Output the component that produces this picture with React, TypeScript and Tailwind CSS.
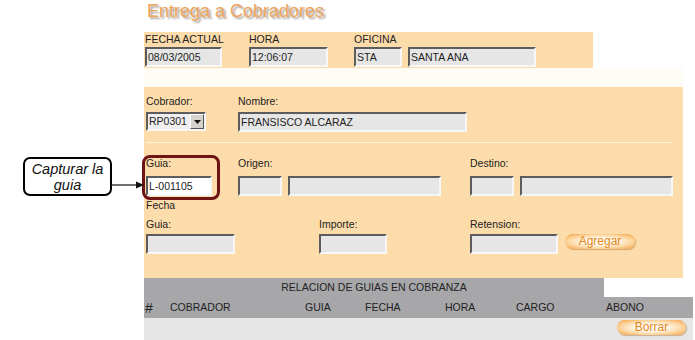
import React from "react"

type FieldProps = {
  w: string
  value?: string
  white?: boolean
}

// Windows-style inset textbox
const Field = ({ w, value = "", white = false }: FieldProps) => (
  <div
    className={`${w} h-[20px] border-2 border-t-[#5c5c5c] border-l-[#5c5c5c] border-b-[#f7f7f7] border-r-[#f7f7f7] ${
      white ? "bg-white" : "bg-[#e6e6e6]"
    } pl-[1px] text-[10.5px] leading-[16px] text-[#222] whitespace-nowrap overflow-hidden`}
  >
    {value}
  </div>
)

const Label = ({ children, w }: { children: React.ReactNode; w?: string }) => (
  <div className={`${w ?? ""} h-[13px] text-[10.5px] leading-[13px] text-[#222] whitespace-nowrap`}>{children}</div>
)

const PillButton = ({ label, w }: { label: string; w: string }) => (
  <div
    className={`${w} h-[15px] rounded-full bg-[radial-gradient(ellipse_at_center,#fffbf2_30%,#fcd49c_65%,#f29a3a_100%)] shadow-[1px_1px_1px_rgba(150,90,20,0.4)] flex items-center justify-center text-[12px] leading-[15px] text-[#e5871a]`}
  >
    {label}
  </div>
)

export default function App() {
  return (
    <div className="relative w-[695px] h-[340px] bg-white overflow-hidden font-['Liberation_Sans',Arial,sans-serif]">
      <div className="ml-[144px] flex flex-col">
        {/* Title */}
        <div className="h-[32px] pl-[3px] pt-[1px] text-[18px] leading-[20px] text-[#eea55c] [text-shadow:2px_2px_2px_rgba(60,40,20,0.45)]">
          Entrega a Cobradores
        </div>

        {/* Top panel */}
        <div className="w-[449px] h-[36px] bg-[#fddcab] flex pl-[1px] pt-[1px]">
          <div className="w-[104px] flex flex-col gap-[1px]">
            <Label>FECHA ACTUAL</Label>
            <Field w="w-[77px]" value="08/03/2005" />
          </div>
          <div className="w-[105px] flex flex-col gap-[1px]">
            <Label>HORA</Label>
            <Field w="w-[79px]" value="12:06:07" />
          </div>
          <div className="flex flex-col gap-[1px]">
            <Label>OFICINA</Label>
            <div className="flex gap-[6px]">
              <Field w="w-[48px]" value="STA" />
              <Field w="w-[128px]" value="SANTA ANA" />
            </div>
          </div>
        </div>

        <div className="w-[539px] h-[19px] bg-[#fffcf6]" />

        {/* Main panel */}
        <div className="w-[539px] h-[191px] bg-[#fddcab] pl-[2px] pt-[8px] flex flex-col">
          <div className="flex">
            <Label w="w-[92px]">Cobrador:</Label>
            <Label>Nombre:</Label>
          </div>
          <div className="flex mt-[4px]">
            <div className="w-[92px]">
              <div className="w-[60px] h-[19px] border-2 border-t-[#5c5c5c] border-l-[#5c5c5c] border-b-[#f7f7f7] border-r-[#f7f7f7] bg-[#efefef] flex items-center justify-between">
                <span className="pl-[1px] text-[10.5px] leading-[13px] text-[#222]">RP0301</span>
                <span className="w-[14px] h-[15px] bg-[#d6d3ce] border border-t-white border-l-white border-b-[#555] border-r-[#555] flex items-center justify-center">
                  <svg width="7" height="4" viewBox="0 0 7 4">
                    <path d="M0 0h7L3.5 4z" fill="#111" />
                  </svg>
                </span>
              </div>
            </div>
            <Field w="w-[229px]" value="FRANSISCO ALCARAZ" />
          </div>
          <div className="w-[527px] h-[1px] bg-[#9a8670] mt-[10px] border-b border-b-[#fff3e0]" />

          <div className="flex mt-[14px]">
            <Label w="w-[92px]">Guia:</Label>
            <Label w="w-[232px]">Origen:</Label>
            <Label>Destino:</Label>
          </div>
          <div className="flex mt-[6px]">
            <div className="w-[92px]">
              <Field w="w-[66px]" value="L-001105" white />
            </div>
            <div className="w-[232px] flex gap-[6px]">
              <Field w="w-[44px]" />
              <Field w="w-[153px]" />
            </div>
            <div className="flex gap-[6px]">
              <Field w="w-[44px]" />
              <Field w="w-[153px]" />
            </div>
          </div>
          <div className="mt-[3px]">
            <Label>Fecha</Label>
          </div>

          <div className="flex mt-[6px]">
            <Label w="w-[173px]">Guia:</Label>
            <Label w="w-[151px]">Importe:</Label>
            <Label>Retension:</Label>
          </div>
          <div className="flex mt-[3px] items-start">
            <div className="w-[173px]">
              <Field w="w-[89px]" />
            </div>
            <div className="w-[151px]">
              <Field w="w-[68px]" />
            </div>
            <Field w="w-[88px]" />
            <div className="ml-[7px]">
              <PillButton label="Agregar" w="w-[70px]" />
            </div>
          </div>
        </div>

        {/* Relacion table */}
        <div className="w-[460px] h-[19px] bg-[#a7a7aa] text-center text-[10.5px] leading-[19px] text-[#222]">
          RELACION DE GUIAS EN COBRANZA
        </div>
        <div className="w-[549px] h-[21px] bg-[#a7a7aa] flex items-center pl-[1px] text-[10.5px] text-[#222]">
          <span className="w-[25px] text-[14px] leading-[16px]">#</span>
          <span className="w-[135px]">COBRADOR</span>
          <span className="w-[60px]">GUIA</span>
          <span className="w-[80px]">FECHA</span>
          <span className="w-[71px]">HORA</span>
          <span className="w-[90px]">CARGO</span>
          <span>ABONO</span>
        </div>
        <div className="w-[549px] h-[22px] bg-[#e6e6e6] flex justify-end pr-[7px] pt-[2px]">
          <PillButton label="Borrar" w="w-[69px]" />
        </div>
      </div>

      {/* Annotation: red highlight around Guia */}
      <div className="absolute left-[142px] top-[155px] w-[78px] h-[45px] rounded-[8px] border-[3px] border-[#6e1414]" />

      {/* Annotation: callout */}
      <div className="absolute left-[23px] top-[157px] w-[89px] h-[39px] rounded-[7px] border-2 border-black bg-white flex flex-col items-center justify-center italic text-[14.5px] leading-[16px] text-[#111]">
        <span>Capturar la</span>
        <span>guia</span>
      </div>
      <svg className="absolute left-[111px] top-[180px]" width="34" height="10" viewBox="0 0 34 10">
        <line x1="0" y1="5" x2="26" y2="5" stroke="#111" strokeWidth="1.2" />
        <path d="M25 1.5 L33 5 L25 8.5 z" fill="#111" />
      </svg>
    </div>
  )
}
